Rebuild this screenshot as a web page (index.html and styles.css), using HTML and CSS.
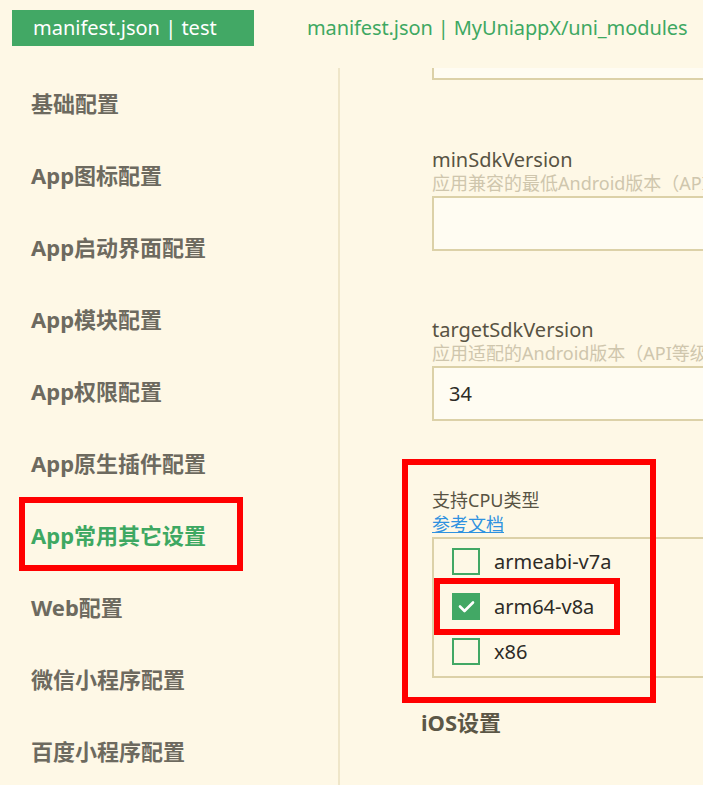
FILE: index.html
```html
<!DOCTYPE html>
<html lang="zh-CN">
<head>
<meta charset="utf-8">
<title>manifest.json</title>
<link rel="stylesheet" href="styles.css">
</head>
<body>
<div class="app">
  <header class="tabs">
    <div class="tab active">manifest.json | test</div>
    <div class="tab">manifest.json | MyUniappX/uni_modules</div>
  </header>
  <div class="main">
    <nav class="sidebar">
      <div class="nav-item">基础配置</div>
      <div class="nav-item">App图标配置</div>
      <div class="nav-item">App启动界面配置</div>
      <div class="nav-item">App模块配置</div>
      <div class="nav-item">App权限配置</div>
      <div class="nav-item">App原生插件配置</div>
      <div class="nav-item current marked">App常用其它设置</div>
      <div class="nav-item">Web配置</div>
      <div class="nav-item">微信小程序配置</div>
      <div class="nav-item">百度小程序配置</div>
    </nav>
    <section class="content">
      <div class="input scrolled"></div>

      <div class="field">
        <div class="label">minSdkVersion</div>
        <div class="desc">应用兼容的最低Android版本（API等级）</div>
        <div class="input"></div>
      </div>

      <div class="field">
        <div class="label">targetSdkVersion</div>
        <div class="desc">应用适配的Android版本（API等级）</div>
        <div class="input">34</div>
      </div>

      <div class="field cpu">
        <div class="label">支持CPU类型</div>
        <a class="doc-link">参考文档</a>
        <div class="check-group">
          <div class="check-row">
            <span class="box"></span><span class="check-text">armeabi-v7a</span>
          </div>
          <div class="check-row marked-row">
            <span class="box checked">
              <svg viewBox="0 0 27 27" width="27" height="27"><path d="M7 13.5 L11.5 18 L20 9.5" fill="none" stroke="#fff" stroke-width="2.6" stroke-linecap="round" stroke-linejoin="round"/></svg>
            </span><span class="check-text">arm64-v8a</span>
          </div>
          <div class="check-row">
            <span class="box"></span><span class="check-text">x86</span>
          </div>
        </div>
      </div>

      <h2 class="section-title">iOS设置</h2>
    </section>
  </div>
</div>
</body>
</html>
```

FILE: styles.css
```css
html, body {
  margin: 0;
  padding: 0;
  background: #fef8e6;
}
body {
  font-family: "Noto Sans", "Noto Sans CJK SC", sans-serif;
  width: 703px;
  height: 785px;
  overflow: hidden;
}
.app {
  display: flex;
  flex-direction: column;
  height: 785px;
}
.tabs {
  height: 68px;
  display: flex;
  align-items: flex-start;
  padding: 10px 0 0 12px;
  box-sizing: border-box;
  gap: 32px;
  flex: none;
}
.tab {
  height: 36px;
  line-height: 36px;
  font-size: 20px;
  color: #3ea862;
  white-space: nowrap;
}
.tab.active {
  background: #42a865;
  color: #ffffff;
  width: 242px;
  box-sizing: border-box;
  padding-left: 21px;
}
.tab:not(.active) {
  margin-left: 21px;
  letter-spacing: -0.1px;
}
.main {
  display: flex;
  flex: 1;
  min-height: 0;
}
.sidebar {
  width: 338px;
  border-right: 2px solid #efe6c9;
  flex: none;
  display: flex;
  flex-direction: column;
}
.nav-item {
  height: 72px;
  line-height: 70px;
  padding-left: 31px;
  font-weight: 700;
  font-size: 22px;
  color: #6d6a5f;
  white-space: nowrap;
  flex: none;
}
.nav-item.current {
  color: #3ea862;
}
.marked {
  position: relative;
}
.marked::after {
  content: "";
  position: absolute;
  left: 19px;
  top: -3px;
  width: 224px;
  height: 74px;
  box-sizing: border-box;
  border: 6px solid #ff0000;
}
.content {
  flex: 1;
  padding-left: 92px;
  overflow: hidden;
  color: #5a5545;
}
.input {
  height: 55px;
  box-sizing: border-box;
  border: 2px solid #dcd1a8;
  background: #fffcf2;
  font-size: 20px;
  line-height: 51px;
  padding-left: 15px;
  color: #2d2b26;
  margin-right: -20px;
}
.input.scrolled {
  height: 12px;
  border-top: none;
}
.field {
  margin-top: 68px;
}
.field + .field {
  margin-top: 67px;
}
.label {
  font-size: 20px;
  line-height: 24px;
  color: #585343;
  white-space: nowrap;
}
.cpu .label {
  font-size: 18px;
}
.desc {
  font-size: 18px;
  line-height: 22px;
  color: #cfc6ad;
  white-space: nowrap;
  margin-bottom: 2px;
  overflow: hidden;
}
.cpu {
  position: relative;
}
.cpu::before {
  content: "";
  position: absolute;
  left: -30px;
  top: -29px;
  width: 254px;
  height: 244px;
  box-sizing: border-box;
  border: 6px solid #ff0000;
  pointer-events: none;
  z-index: 2;
}
.doc-link {
  display: block;
  font-size: 18px;
  line-height: 25px;
  color: #2f92e0;
  text-decoration: underline;
  width: max-content;
}
.check-group {
  border: 2px solid #dcd1a8;
  margin-right: -20px;
  padding-bottom: 2px;
}
.check-row {
  height: 45px;
  display: flex;
  align-items: center;
  padding-left: 18px;
  gap: 14px;
}
.marked-row {
  position: relative;
}
.marked-row::after {
  content: "";
  position: absolute;
  left: 0;
  top: -6px;
  width: 186px;
  height: 57px;
  box-sizing: border-box;
  border: 6px solid #ff0000;
}
.box {
  width: 28px;
  height: 27px;
  box-sizing: border-box;
  border: 2px solid #42a865;
  display: flex;
  align-items: center;
  justify-content: center;
  flex: none;
}
.box.checked {
  background: #42a865;
}
.box svg {
  display: block;
  flex: none;
}
.check-text {
  font-size: 20px;
  color: #2d2b26;
  line-height: 24px;
}
.section-title {
  margin: 30px 0 0 -11px;
  font-size: 22px;
  font-weight: 700;
  line-height: 28px;
  color: #5c5746;
}
```
